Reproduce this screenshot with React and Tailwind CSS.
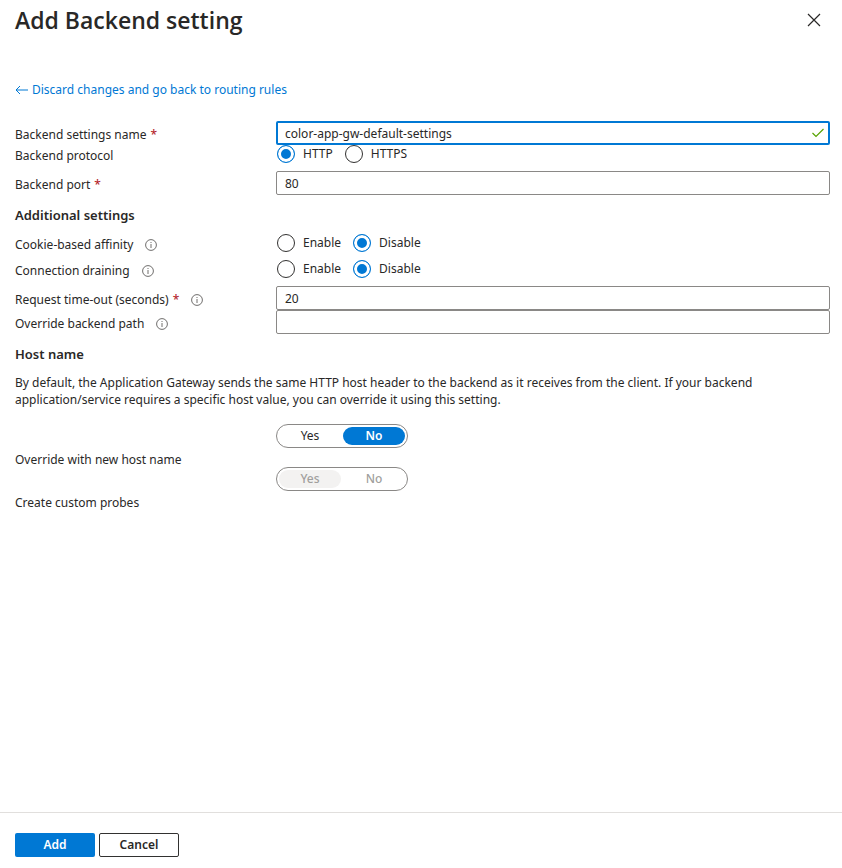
import { useState } from 'react';

function InfoIcon({ label }) {
  return (
    <button type="button" aria-label={`More about ${label}`} className="ml-3 shrink-0">
      <svg width="12" height="12" viewBox="0 0 12 12" fill="none" stroke="#605e5c" aria-hidden="true">
        <circle cx="6" cy="6" r="5.4" strokeWidth="0.9" />
        <path d="M6 5v4M6 3v1" strokeWidth="0.9" />
      </svg>
    </button>
  );
}

function Caption({ id, group, required, info, children }) {
  const Tag = group ? 'span' : 'label';
  return (
    <div className="flex items-center pt-1 leading-[14px]">
      <Tag id={group ? id : undefined} htmlFor={group ? undefined : id}>
        {children}
        {required && <span className="ml-1 font-medium text-[#b5282f]">*</span>}
      </Tag>
      {info && <InfoIcon label={children} />}
    </div>
  );
}

function Row({ className = '', children }) {
  return <div className={`grid grid-cols-[261px_minmax(0,1fr)] ${className}`}>{children}</div>;
}

function TextField({ id, defaultValue }) {
  return (
    <input
      id={id}
      type="text"
      defaultValue={defaultValue}
      className="block h-6 w-full rounded-xs border border-[#8a8886] bg-white px-2 outline-none focus:border-2 focus:border-[#0078d4] focus:px-[7px]"
    />
  );
}

function RadioGroup({ id, options, initial }) {
  const [value, setValue] = useState(initial);
  return (
    <div role="radiogroup" aria-labelledby={id} className="flex gap-3 pl-px">
      {options.map((option) => (
        <label key={option} className="flex items-center gap-2 leading-[18px]">
          <input
            type="radio"
            name={id}
            checked={value === option}
            onChange={() => setValue(option)}
            className="size-[18px] appearance-none rounded-full border border-[#323130] bg-white checked:border-[#0078d4] checked:bg-[#0078d4] checked:shadow-[inset_0_0_0_3px_white]"
          />
          {option}
        </label>
      ))}
    </div>
  );
}

function Toggle({ id, initial, disabled }) {
  const [value, setValue] = useState(initial);
  return (
    <fieldset
      aria-labelledby={id}
      disabled={disabled}
      className="grid h-6 w-[132px] grid-cols-2 gap-[2px] rounded-full border border-[#8a8886] p-[2px]"
    >
      {['Yes', 'No'].map((option) => {
        const on = value === option;
        let tone = 'text-[#292827]';
        if (disabled) tone = on ? 'bg-[#f3f2f1] font-medium text-[#a19f9d]' : 'font-medium text-[#a19f9d]';
        else if (on) tone = 'bg-[#0078d4] font-semibold text-white';
        return (
          <label key={option} className={`relative rounded-full text-center leading-[18px] ${tone}`}>
            <input
              type="radio"
              name={id}
              checked={on}
              onChange={() => setValue(option)}
              className="sr-only"
            />
            {option}
          </label>
        );
      })}
    </fieldset>
  );
}

export default function App() {
  return (
    <div className="flex min-h-screen flex-col bg-white font-['Noto_Sans','Open_Sans',sans-serif] text-[12px] text-[#292827]">
      <header className="flex h-10 items-center justify-between pr-[21px] pl-[15px]">
        <h1 className="font-['Open_Sans','Noto_Sans',sans-serif] text-[23px] leading-10 font-semibold">Add Backend setting</h1>
        <button type="button" aria-label="Close">
          <svg width="14" height="14" viewBox="0 0 14 14" fill="none" stroke="#292827" strokeWidth="1.2" aria-hidden="true">
            <path d="M1 1l12 12M13 1L1 13" />
          </svg>
        </button>
      </header>

      <main className="flex-1 pt-10 pr-3 pb-6 pl-[15px]">
        <a href="#routing-rules" className="flex items-center gap-1 leading-5 text-[#0078d4]">
          <svg width="13" height="10" viewBox="0 0 13 10" fill="none" stroke="currentColor" aria-hidden="true">
            <path d="M1 5h12M5 1L1 5l4 4" />
          </svg>
          Discard changes and go back to routing rules
        </a>

        <form id="backend-setting" className="pt-[21px]">
          <Row className="items-center">
            <Caption id="name" required>Backend settings name</Caption>
            <div className="relative">
              <input
                id="name"
                type="text"
                defaultValue="color-app-gw-default-settings"
                className="block h-6 w-full rounded-xs border-2 border-[#0078d4] bg-white pr-6 pl-[7px] outline-none"
              />
              <svg className="absolute top-[7px] right-[6px]" width="12" height="10" viewBox="0 0 12 10" fill="none" stroke="#57a300" strokeWidth="1.2" aria-hidden="true">
                <path d="M0.5 5L4 8.5L11.5 1" />
              </svg>
            </div>
          </Row>
          <Row className="items-center">
            <Caption id="protocol" group>Backend protocol</Caption>
            <RadioGroup id="protocol" options={['HTTP', 'HTTPS']} initial="HTTP" />
          </Row>
          <Row className="items-center pt-2">
            <Caption id="port" required>Backend port</Caption>
            <TextField id="port" defaultValue="80" />
          </Row>

          <h2 className="pt-[10px] text-[13px] leading-5 font-semibold">Additional settings</h2>

          <Row className="items-center pt-[9px]">
            <Caption id="affinity" group info>Cookie-based affinity</Caption>
            <RadioGroup id="affinity" options={['Enable', 'Disable']} initial="Disable" />
          </Row>
          <Row className="items-center pt-2">
            <Caption id="draining" group info>Connection draining</Caption>
            <RadioGroup id="draining" options={['Enable', 'Disable']} initial="Disable" />
          </Row>
          <Row className="items-center pt-2">
            <Caption id="timeout" required info>Request time-out (seconds)</Caption>
            <TextField id="timeout" defaultValue="20" />
          </Row>
          <Row className="items-center">
            <Caption id="path" info>Override backend path</Caption>
            <TextField id="path" defaultValue="" />
          </Row>

          <h2 className="pt-[10px] text-[13px] leading-5 font-semibold">Host name</h2>
          <p className="max-w-[780px] pt-[10px] leading-[17px]">
            By default, the Application Gateway sends the same HTTP host header to the backend as it receives from the client. If your backend application/service requires a specific host value, you can override it using this setting.
          </p>

          <Row className="pt-4">
            <div className="pt-[25px]">
              <Caption id="override" group>Override with new host name</Caption>
            </div>
            <Toggle id="override" initial="No" />
          </Row>
          <Row>
            <div className="pt-[25px]">
              <Caption id="probes" group>Create custom probes</Caption>
            </div>
            <Toggle id="probes" initial="Yes" disabled />
          </Row>
        </form>
      </main>

      <footer className="flex gap-1 border-t border-[#e1dfdd] pt-5 pb-[11px] pl-[15px] font-semibold">
        <button type="submit" form="backend-setting" className="h-6 w-20 rounded-xs bg-[#0078d4] text-white">Add</button>
        <button type="button" className="h-6 w-20 rounded-xs border border-[#323130] bg-white">Cancel</button>
      </footer>
    </div>
  );
}
